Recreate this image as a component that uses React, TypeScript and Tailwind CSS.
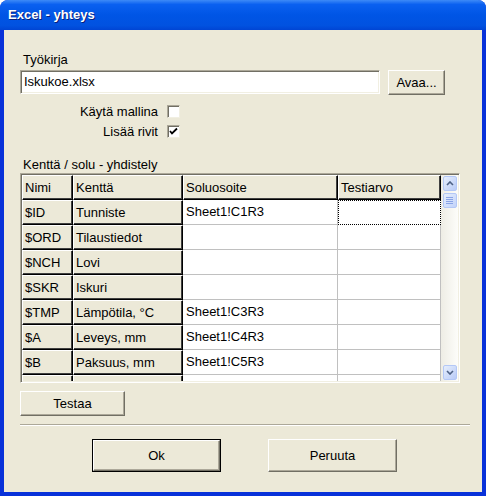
import React from "react";

const ROWS: [string, string, string][] = [
  ["$ID", "Tunniste", "Sheet1!C1R3"],
  ["$ORD", "Tilaustiedot", ""],
  ["$NCH", "Lovi", ""],
  ["$SKR", "Iskuri", ""],
  ["$TMP", "Lämpötila, °C", "Sheet1!C3R3"],
  ["$A", "Leveys, mm", "Sheet1!C4R3"],
  ["$B", "Paksuus, mm", "Sheet1!C5R3"],
  ["$W", "Tarkastuskohta", "Sheet1!C6R3"],
];

const raised =
  "border border-t-white border-l-white border-r-[#716f64] border-b-[#716f64] shadow-[inset_-1px_-1px_0_#aca899] bg-[#ece9d8]";

function FixedCell({ w, children }: { w: string; children?: React.ReactNode }) {
  return (
    <div
      className={`${w} h-[25px] shrink-0 flex items-center pl-[2px] bg-[#ece9d8] border-t border-l border-t-white border-l-white border-r border-b border-r-black border-b-black shadow-[inset_-1px_-1px_0_#404040] whitespace-nowrap overflow-hidden`}
    >
      {children}
    </div>
  );
}

function DataCell({ w, focus, children }: { w: string; focus?: boolean; children?: React.ReactNode }) {
  return (
    <div
      className={`${w} h-[25px] shrink-0 flex items-center pl-[3px] bg-white whitespace-nowrap overflow-hidden ${
        focus ? "border border-dotted border-black" : "border-r border-b border-[#c0c0c0]"
      }`}
    >
      {children}
    </div>
  );
}

function ScrollBtn({ dir }: { dir: "up" | "down" }) {
  return (
    <div className="w-[14px] h-[15px] shrink-0 rounded-[2px] border border-[#b4c8f6] bg-gradient-to-br from-[#e6eefc] to-[#b9cbf7] flex items-center justify-center">
      <svg width="8" height="5" viewBox="0 0 8 5">
        <path
          d={dir === "up" ? "M1 4 L4 1 L7 4" : "M1 1 L4 4 L7 1"}
          fill="none"
          stroke="#4d6185"
          strokeWidth="1.6"
        />
      </svg>
    </div>
  );
}

function Check({ checked }: { checked?: boolean }) {
  return (
    <div className="w-[13px] h-[13px] bg-white border border-t-[#aca899] border-l-[#aca899] border-r-[#f1efe2] border-b-[#f1efe2] shadow-[inset_1px_1px_0_#716f64] flex items-center justify-center">
      {checked && (
        <svg width="9" height="9" viewBox="0 0 9 9">
          <path d="M1 4 L3 6.5 L8 1.5" fill="none" stroke="#000" strokeWidth="1.8" />
        </svg>
      )}
    </div>
  );
}

export default function App() {
  return (
    <div className="w-[486px] h-[496px] flex flex-col rounded-t-[8px] overflow-hidden bg-[#0831d9] font-['Liberation_Sans',Arial,sans-serif] text-[13px] text-black">
      {/* Title bar */}
      <div className="h-[30px] shrink-0 flex items-center px-[8px] bg-[linear-gradient(to_bottom,#3d8af7_0%,#0a60f0_15%,#0055e5_50%,#0152e0_85%,#0045d4_100%)]">
        <span className="text-white font-bold text-[13px] [text-shadow:1px_1px_0_#0a1f7a]">Excel - yhteys</span>
      </div>

      {/* Body */}
      <div className="flex-1 mx-[4px] mb-[4px] bg-[#ece9d8] px-[16px] pt-[22px] flex flex-col">
        <div className="h-[16px] leading-[16px] pl-[3px]">Työkirja</div>
        <div className="mt-[2px] flex items-start gap-[8px]">
          <div className="w-[360px] h-[24px] bg-white border border-t-[#aca899] border-l-[#aca899] border-r-white border-b-white shadow-[inset_1px_1px_0_#716f64,inset_-1px_-1px_0_#f1efe2] flex items-center pl-[3px]">
            Iskukoe.xlsx
          </div>
          <button className={`w-[57px] h-[25px] ${raised} text-[13px]`}>Avaa...</button>
        </div>

        <div className="mt-[10px] flex flex-col gap-[7px] w-[160px]">
          <div className="flex items-center justify-end gap-[9px] h-[13px]">
            <span>Käytä mallina</span>
            <Check />
          </div>
          <div className="flex items-center justify-end gap-[9px] h-[13px]">
            <span>Lisää rivit</span>
            <Check checked />
          </div>
        </div>

        <div className="mt-[19px] h-[16px] leading-[16px] pl-[3px]">Kenttä / solu - yhdistely</div>

        {/* Grid */}
        <div className="w-[440px] h-[210px] shrink-0 border border-t-[#aca899] border-l-[#aca899] border-r-white border-b-white shadow-[inset_1px_1px_0_#716f64,inset_-1px_-1px_0_#f1efe2] p-[1px] flex">
          <div className="w-[419px] h-full overflow-hidden flex flex-col">
            <div className="flex shrink-0">
              <FixedCell w="w-[51px]">Nimi</FixedCell>
              <FixedCell w="w-[110px]">Kenttä</FixedCell>
              <FixedCell w="w-[155px]">Soluosoite</FixedCell>
              <FixedCell w="w-[103px]">Testiarvo</FixedCell>
            </div>
            {ROWS.map(([n, k, s], i) => (
              <div key={n} className="flex shrink-0">
                <FixedCell w="w-[51px]">{n}</FixedCell>
                <FixedCell w="w-[110px]">{k}</FixedCell>
                <DataCell w="w-[155px]">{s}</DataCell>
                <DataCell w="w-[103px]" focus={i === 0} />
              </div>
            ))}
          </div>
          <div className="w-[17px] h-full flex flex-col items-center pt-[1px] pb-[1px] bg-gradient-to-r from-[#eeede5] to-[#fdfdfa]">
            <ScrollBtn dir="up" />
            <div className="mt-[2px] w-[14px] h-[15px] rounded-[2px] border border-[#b4c8f6] bg-gradient-to-br from-[#e6eefc] to-[#c2d3fa] flex flex-col items-center justify-center gap-[1px]">
              <div className="w-[7px] h-px bg-[#8aa4e6]" />
              <div className="w-[7px] h-px bg-[#8aa4e6]" />
              <div className="w-[7px] h-px bg-[#8aa4e6]" />
              <div className="w-[7px] h-px bg-[#8aa4e6]" />
            </div>
            <div className="flex-1" />
            <ScrollBtn dir="down" />
          </div>
        </div>

        <button className={`mt-[8px] w-[105px] h-[25px] ${raised} text-[13px]`}>Testaa</button>

        <div className="mt-[8px] w-[450px] h-[2px] border-t border-t-[#aca899] border-b border-b-white" />

        <div className="mt-[13px] flex">
          <button className="ml-[72px] w-[129px] h-[33px] border border-black bg-[#ece9d8] p-0">
            <div className={`w-full h-full ${raised} flex items-center justify-center`}>Ok</div>
          </button>
          <button className={`ml-[47px] w-[129px] h-[33px] ${raised} text-[13px]`}>Peruuta</button>
        </div>
      </div>
    </div>
  );
}
